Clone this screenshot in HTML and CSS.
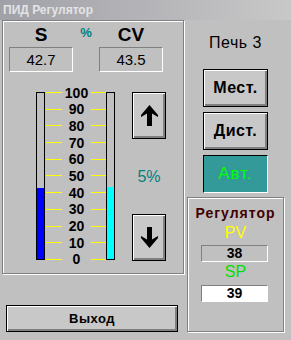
FILE: index.html
```html
<!DOCTYPE html>
<html lang="ru">
<head>
    <meta charset="UTF-8">
    <meta name="viewport" content="width=device-width, initial-scale=1.0">
    <title>ПИД Регулятор</title>
    <link rel="stylesheet" href="styles.css">
</head>
<body>
    <div class="window">
        <div class="titlebar">ПИД Регулятор</div>
        <div class="main">
            <div class="left">
                <div class="panel">
                    <div class="readings">
                        <div class="reading">
                            <div class="tag">S</div>
                            <div class="value">42.7</div>
                        </div>
                        <div class="unit">%</div>
                        <div class="reading">
                            <div class="tag">CV</div>
                            <div class="value">43.5</div>
                        </div>
                    </div>
                    <div class="gauges">
                        <div class="bar"><div class="fill fill-s" style="height: 42.7%"></div></div>
                        <div class="scale">
                            <div class="tick"><span class="line"></span><span class="num">100</span><span class="line line-r"></span></div>
                            <div class="tick"><span class="line"></span><span class="num">90</span><span class="line line-r"></span></div>
                            <div class="tick"><span class="line"></span><span class="num">80</span><span class="line line-r"></span></div>
                            <div class="tick"><span class="line"></span><span class="num">70</span><span class="line line-r"></span></div>
                            <div class="tick"><span class="line"></span><span class="num">60</span><span class="line line-r"></span></div>
                            <div class="tick"><span class="line"></span><span class="num">50</span><span class="line line-r"></span></div>
                            <div class="tick"><span class="line"></span><span class="num">40</span><span class="line line-r"></span></div>
                            <div class="tick"><span class="line"></span><span class="num">30</span><span class="line line-r"></span></div>
                            <div class="tick"><span class="line"></span><span class="num">20</span><span class="line line-r"></span></div>
                            <div class="tick"><span class="line"></span><span class="num">10</span><span class="line line-r"></span></div>
                            <div class="tick"><span class="line"></span><span class="num">0</span><span class="line line-r"></span></div>
                        </div>
                        <div class="bar"><div class="fill fill-cv" style="height: 43.5%"></div></div>
                        <div class="steps">
                            <button class="btn step" type="button">
                                <svg width="17" height="21" viewBox="0 0 17 21"><path d="M8.5 0 L17 10 L17 12 L11 8.5 L11 21 L6 21 L6 8.5 L0 12 L0 10 Z" fill="#000"/></svg>
                            </button>
                            <div class="step-size">5%</div>
                            <button class="btn step" type="button">
                                <svg width="17" height="21" viewBox="0 0 17 21"><path d="M8.5 21 L17 11 L17 9 L11 12.5 L11 0 L6 0 L6 12.5 L0 9 L0 11 Z" fill="#000"/></svg>
                            </button>
                        </div>
                    </div>
                </div>
                <button class="btn exit" type="button">Выход</button>
            </div>
            <div class="right">
                <div class="furnace">Печь 3</div>
                <button class="btn mode" type="button">Мест.</button>
                <button class="btn mode" type="button">Дист.</button>
                <button class="mode auto" type="button">Авт.</button>
                <div class="group">
                    <div class="group-title">Регулятор</div>
                    <div class="pv">PV</div>
                    <div class="field">38</div>
                    <div class="sp">SP</div>
                    <div class="field field-white">39</div>
                </div>
            </div>
        </div>
    </div>
</body>
</html>
```

FILE: styles.css
```css
* {
    box-sizing: border-box;
}
body {
    margin: 0;
    padding: 0;
    background-color: #c0c0c0;
    font-family: "Liberation Sans", Arial, sans-serif;
}
.window {
    width: 291px;
    height: 340px;
    background: #c0c0c0;
}
.titlebar {
    height: 20px;
    line-height: 20px;
    padding-left: 3px;
    font-size: 12px;
    font-weight: bold;
    color: #e4e4e4;
    background: linear-gradient(to right, #a0a0a8, #c8c8c8);
}
.main {
    display: flex;
    padding-left: 2px;
    gap: 3px;
}
.left {
    width: 182px;
}
.panel {
    height: 254px;
    padding-top: 5px;
    border: 1px solid #808080;
    box-shadow: inset 1px 1px 0 #fff, 1px 1px 0 #fff;
}
.readings {
    display: flex;
    padding-left: 6px;
}
.reading {
    width: 64px;
}
.tag {
    font-size: 19px;
    font-weight: bold;
    line-height: 18px;
    text-align: center;
}
.unit {
    width: 26px;
    font-size: 13px;
    font-weight: bold;
    line-height: 14px;
    text-align: center;
    color: #008080;
}
.value {
    height: 25px;
    margin-top: 3px;
    border: 1px solid;
    border-color: #808080 #fff #fff #808080;
    font-size: 15px;
    line-height: 23px;
    text-align: center;
}
.gauges {
    display: flex;
    margin-top: 20px;
    padding-left: 33px;
}
.bar {
    width: 9px;
    height: 168px;
    border: 1px solid #000;
    background: #c0c0c0;
    display: flex;
    flex-direction: column;
    justify-content: flex-end;
}
.fill-s {
    background: #0000ff;
}
.fill-cv {
    background: #00ffff;
}
.scale {
    width: 61px;
    height: 168px;
    padding-left: 1px;
    display: flex;
    flex-direction: column;
    justify-content: space-between;
}
.tick {
    height: 1px;
    display: flex;
    align-items: center;
}
.line {
    width: 16px;
    height: 1px;
    background: #ffff00;
}
.line-r {
    width: 15px;
}
.num {
    width: 29px;
    line-height: 14px;
    font-size: 14px;
    font-weight: bold;
    text-align: center;
}
.btn {
    padding: 0;
    font-family: "Liberation Sans", Arial, sans-serif;
    background: #c8c8c8;
    border: 1px solid #000;
    box-shadow: inset 1px 1px 0 #fff, inset -2px -2px 0 #808080;
    color: #000;
    cursor: pointer;
}
.steps {
    width: 34px;
    height: 169px;
    margin-left: 17px;
    display: flex;
    flex-direction: column;
    justify-content: space-between;
    align-items: center;
}
.step {
    width: 34px;
    height: 47px;
    display: flex;
    align-items: center;
    justify-content: center;
}
.step svg {
    display: block;
}
.step-size {
    font-size: 16px;
    line-height: 18px;
    color: #008080;
}
.exit {
    display: block;
    width: 172px;
    height: 27px;
    margin-top: 31px;
    margin-left: 4px;
    font-size: 13px;
    font-weight: bold;
    letter-spacing: 0.5px;
}
.right {
    width: 97px;
}
.furnace {
    margin-top: 14px;
    font-size: 16px;
    line-height: 17px;
    letter-spacing: 0.5px;
    text-align: center;
}
.mode {
    display: block;
    width: 65px;
    height: 38px;
    margin-top: 5px;
    margin-left: 16px;
    font-size: 16px;
    font-weight: bold;
    letter-spacing: 0.5px;
}
.furnace + .mode {
    margin-top: 18px;
}
.auto {
    padding: 0;
    font-family: "Liberation Sans", Arial, sans-serif;
    font-size: 17px;
    font-weight: normal;
    letter-spacing: 1px;
    background: #339999;
    color: #00ff00;
    border: 1px solid;
    border-color: #000 #fff #fff #000;
}
.group {
    height: 135px;
    margin-top: 4px;
    padding-top: 7px;
    border: 1px solid #808080;
    box-shadow: inset 1px 1px 0 #fff, 1px 1px 0 #fff;
}
.group-title {
    font-size: 14px;
    font-weight: bold;
    line-height: 16px;
    letter-spacing: 1px;
    text-align: center;
    color: #400000;
}
.pv, .sp {
    font-size: 16px;
    line-height: 18px;
    text-align: center;
}
.pv {
    margin-top: 3px;
    color: #ffff00;
}
.sp {
    margin-top: 1px;
    color: #00e000;
}
.field {
    width: 67px;
    height: 17px;
    margin-top: 3px;
    margin-left: 13px;
    border: 1px solid;
    border-color: #808080 #fff #fff #808080;
    font-size: 14px;
    font-weight: bold;
    line-height: 15px;
    text-align: center;
}
.field-white {
    margin-top: 4px;
    background: #fff;
}
```
